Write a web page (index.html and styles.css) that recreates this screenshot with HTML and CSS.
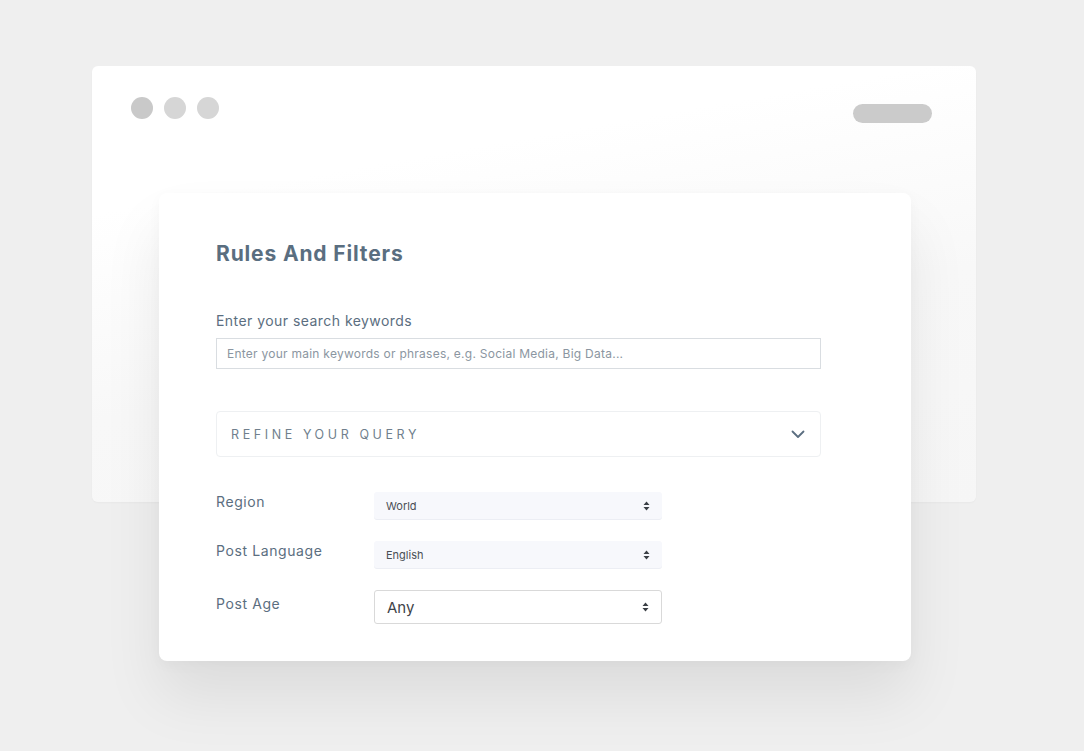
FILE: index.html
```html
<!DOCTYPE html>
<html lang="en">
<head>
<meta charset="utf-8">
<title>Rules And Filters</title>
<link rel="stylesheet" href="styles.css">
</head>
<body>
<div class="stage">
  <div class="window">
    <div class="window-bar">
      <div class="dots">
        <span class="dot dot-first"></span>
        <span class="dot"></span>
        <span class="dot"></span>
      </div>
      <span class="pill"></span>
    </div>
  </div>
  <div class="card">
    <h1 class="title">Rules And Filters</h1>
    <label class="field-label">Enter your search keywords</label>
    <div class="text-input">Enter your main keywords or phrases, e.g. Social Media, Big Data...</div>
    <div class="refine">
      <span class="refine-text">REFINE YOUR QUERY</span>
      <svg class="chevron" width="14" height="9" viewBox="0 0 14 9"><path d="M1.5 1.5 L7 7 L12.5 1.5" fill="none" stroke="#5b6e80" stroke-width="1.8" stroke-linecap="round" stroke-linejoin="round"/></svg>
    </div>
    <div class="rows">
      <div class="row">
        <span class="row-label">Region</span>
        <div class="select select-soft"><span>World</span>
          <svg class="updown" width="7" height="10" viewBox="0 0 7 10"><path d="M3.5 0.5 L6.5 4 H0.5 Z M3.5 9.5 L6.5 6 H0.5 Z" fill="#3a3f45"/></svg>
        </div>
      </div>
      <div class="row">
        <span class="row-label">Post Language</span>
        <div class="select select-soft"><span>English</span>
          <svg class="updown" width="7" height="10" viewBox="0 0 7 10"><path d="M3.5 0.5 L6.5 4 H0.5 Z M3.5 9.5 L6.5 6 H0.5 Z" fill="#3a3f45"/></svg>
        </div>
      </div>
      <div class="row row-last">
        <span class="row-label">Post Age</span>
        <div class="select select-bordered"><span>Any</span>
          <svg class="updown" width="7" height="10" viewBox="0 0 7 10"><path d="M3.5 0.5 L6.5 4 H0.5 Z M3.5 9.5 L6.5 6 H0.5 Z" fill="#3a3f45"/></svg>
        </div>
      </div>
    </div>
  </div>
</div>
</body>
</html>
```
FILE: styles.css
```css
* { box-sizing: border-box; }
html, body {
  margin: 0;
  padding: 0;
  background: #efefef;
  width: 1084px;
  height: 751px;
  overflow: hidden;
  font-family: "Inter", "DejaVu Sans", sans-serif;
}
.stage {
  position: relative;
  width: 1084px;
  height: 751px;
  padding: 66px 0 0 92px;
}
.window {
  width: 884px;
  height: 436px;
  border-radius: 6px;
  background: linear-gradient(170deg, #ffffff 0%, #ffffff 25%, #f8f8f8 60%, #f6f6f6 100%);
  box-shadow: 0 1px 2px rgba(0,0,0,0.03);
}
.window-bar {
  display: flex;
  justify-content: space-between;
  align-items: flex-start;
  padding: 31px 44px 0 39px;
}
.dots {
  display: flex;
  gap: 11px;
}
.dot {
  width: 22px;
  height: 22px;
  border-radius: 50%;
  background: #d6d6d6;
}
.dot-first { background: #c9c9c9; }
.pill {
  width: 79px;
  height: 19px;
  border-radius: 10px;
  background: #cbcbcb;
  margin-top: 7px;
}
.card {
  position: absolute;
  left: 159px;
  top: 193px;
  width: 752px;
  height: 468px;
  background: #ffffff;
  border-radius: 8px;
  box-shadow: 0 36px 60px rgba(0,0,0,0.08), 0 4px 14px rgba(0,0,0,0.03);
  padding: 47px 90px 0 57px;
  color: #5b6e80;
}
.title {
  margin: 0;
  font-size: 21px;
  font-weight: 700;
  line-height: 28px;
  color: #5a6e80;
  letter-spacing: 0.85px;
}
.field-label {
  display: block;
  margin-top: 44px;
  font-size: 14px;
  line-height: 18px;
  color: #5b6e80;
  letter-spacing: 0.45px;
}
.text-input {
  margin-top: 8px;
  width: 605px;
  height: 31px;
  border: 1px solid #d9dde1;
  padding: 0 10px;
  font-size: 12px;
  line-height: 29px;
  color: #8b96a1;
  letter-spacing: 0.25px;
}
.refine {
  margin-top: 42px;
  width: 605px;
  height: 46px;
  border: 1px solid #eef0f2;
  border-radius: 4px;
  display: flex;
  justify-content: space-between;
  align-items: center;
  padding: 0 15px 0 14px;
}
.refine-text {
  font-size: 12.5px;
  letter-spacing: 3.6px;
  color: #707f8d;
}
.chevron { margin-top: 1px; }
.rows {
  margin-top: 35px;
  display: flex;
  flex-direction: column;
  gap: 22px;
}
.row {
  display: flex;
  align-items: center;
}
.row-label {
  width: 158px;
  font-size: 14px;
  line-height: 20px;
  margin-bottom: 7px;
  color: #5b6e80;
  letter-spacing: 0.6px;
}
.select {
  width: 288px;
  display: flex;
  justify-content: space-between;
  align-items: center;
  padding: 0 11px 0 12px;
  color: #4a4f55;
}
.select-soft {
  height: 27px;
  background: #f7f8fc;
  border-radius: 3px;
  box-shadow: 0 1px 0 #eceef4;
  font-size: 11px;
}
.select-bordered {
  height: 34px;
  border: 1px solid #d9d9d9;
  border-radius: 3px;
  font-size: 15px;
  color: #3f4449;
}
.updown { margin-right: 1px; }
```
